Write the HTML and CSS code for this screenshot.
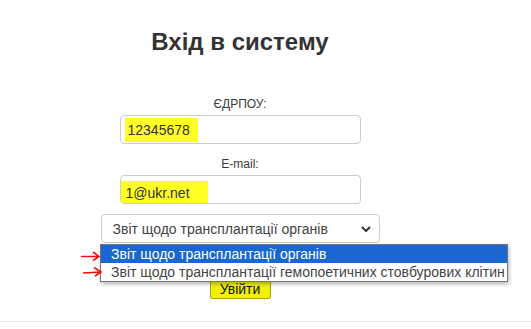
FILE: index.html
```html
<!DOCTYPE html>
<html lang="uk">
<head>
    <meta charset="UTF-8">
    <title>Вхід в систему</title>
    <link rel="stylesheet" href="styles.css">
</head>
<body>
    <div class="page">
        <h1>Вхід в систему</h1>
        <div class="form">
            <label>ЄДРПОУ:</label>
            <div class="field"><span class="mark mark-code">12345678</span></div>
            <label>E-mail:</label>
            <div class="field"><span class="mark mark-mail">1@ukr.net</span></div>
            <div class="select">
                <span>Звіт щодо трансплантації органів</span>
                <svg width="10" height="6" viewBox="0 0 10 6"><path d="M1 1l4 4 4-4" fill="none" stroke="#333" stroke-width="2"/></svg>
            </div>
            <button class="login">Увійти</button>
        </div>
        <div class="options">
            <div class="option selected">Звіт щодо трансплантації органів</div>
            <div class="option">Звіт щодо трансплантації гемопоетичних стовбурових клітин</div>
        </div>
        <svg class="arrows" width="24" height="36" viewBox="0 0 24 36">
            <path d="M1 12.5h18M13 8l6 4.5-6 4" fill="none" stroke="#f01010" stroke-width="1.6"/>
            <path d="M3 29l18-1M14 23.5l7 4.5-6 4" fill="none" stroke="#f01010" stroke-width="1.6"/>
        </svg>
    </div>
    <div class="footer"></div>
</body>
</html>
```

FILE: styles.css
```css
body {
    font-family: "Liberation Sans", Arial, sans-serif;
    background-color: #ffffff;
    color: #333;
    margin: 0;
}
.page {
    position: relative;
    width: 480px;
    padding-top: 28px;
}
h1 {
    font-size: 24px;
    line-height: 28px;
    text-align: center;
    margin: 0;
    color: #333;
}
.form {
    display: flex;
    flex-direction: column;
    align-items: center;
    padding-top: 41px;
}
label {
    font-size: 12px;
    line-height: 14px;
    margin-bottom: 4px;
    color: #3a3a3a;
}
.field {
    width: 241px;
    height: 29px;
    box-sizing: border-box;
    border: 1px solid #ccc;
    border-radius: 4px;
    margin-bottom: 13px;
    display: flex;
    align-items: center;
    font-size: 14px;
    color: #333;
}
.mark {
    background-color: #ffff26;
}
.mark-code {
    margin-left: 4px;
    padding: 4px 8px 4px 3px;
}
.mark-mail {
    margin-left: 0;
    padding: 4px 18px 2px 5px;
    margin-top: 5px;
}
.select {
    width: 279px;
    height: 29px;
    box-sizing: border-box;
    border: 1px solid #ccc;
    border-radius: 4px;
    margin-top: -3px;
    padding: 0 8px 0 11px;
    display: flex;
    align-items: center;
    justify-content: space-between;
    font-size: 14px;
    color: #444;
}
.login {
    margin-top: 36px;
    height: 20px;
    width: 61px;
    padding: 0;
    font-family: inherit;
    font-size: 14px;
    font-weight: normal;
    color: #111;
    background-color: #f2f200;
    border: 1px solid #a8a800;
    border-radius: 2px;
}
.options {
    position: absolute;
    left: 100px;
    top: 244px;
    width: 408px;
    box-sizing: border-box;
    border: 1px solid #777;
    background-color: #fff;
    box-shadow: 1px 2px 4px rgba(0, 0, 0, 0.3);
    font-size: 14px;
}
.option {
    height: 18px;
    line-height: 18px;
    padding-left: 10px;
    color: #444;
}
.option.selected {
    background-color: #1a67d2;
    color: #fff;
}
.arrows {
    position: absolute;
    left: 80px;
    top: 244px;
}
.footer {
    margin-top: 22px;
    border-top: 1px solid #e6e6e6;
}
```
